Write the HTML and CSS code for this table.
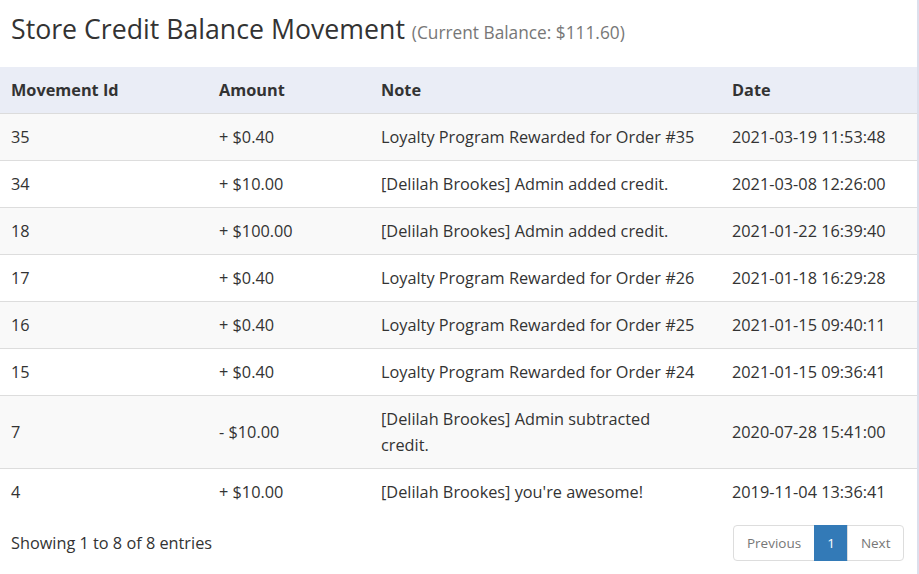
FILE: index.html
```html
<!DOCTYPE html>
<html>
<head>
<meta charset="utf-8">
<link rel="stylesheet" href="styles.css">
</head>
<body>
<div class="page">
  <h1 class="title">Store Credit Balance Movement <small class="sub">(Current Balance: $111.60)</small></h1>
  <table class="grid">
    <colgroup>
      <col class="c-id"><col class="c-amt"><col class="c-note"><col class="c-date">
    </colgroup>
    <thead>
      <tr><th>Movement Id</th><th>Amount</th><th>Note</th><th>Date</th></tr>
    </thead>
    <tbody>
      <tr><td>35</td><td>+ $0.40</td><td class="note">Loyalty Program Rewarded for Order #35</td><td>2021-03-19 11:53:48</td></tr>
      <tr><td>34</td><td>+ $10.00</td><td class="note">[Delilah Brookes] Admin added credit.</td><td>2021-03-08 12:26:00</td></tr>
      <tr><td>18</td><td>+ $100.00</td><td class="note">[Delilah Brookes] Admin added credit.</td><td>2021-01-22 16:39:40</td></tr>
      <tr><td>17</td><td>+ $0.40</td><td class="note">Loyalty Program Rewarded for Order #26</td><td>2021-01-18 16:29:28</td></tr>
      <tr><td>16</td><td>+ $0.40</td><td class="note">Loyalty Program Rewarded for Order #25</td><td>2021-01-15 09:40:11</td></tr>
      <tr><td>15</td><td>+ $0.40</td><td class="note">Loyalty Program Rewarded for Order #24</td><td>2021-01-15 09:36:41</td></tr>
      <tr><td>7</td><td>- $10.00</td><td class="note">[Delilah Brookes] Admin subtracted credit.</td><td>2020-07-28 15:41:00</td></tr>
      <tr><td>4</td><td>+ $10.00</td><td class="note">[Delilah Brookes] you're awesome!</td><td>2019-11-04 13:36:41</td></tr>
    </tbody>
  </table>
  <div class="footer">
    <div class="info">Showing 1 to 8 of 8 entries</div>
    <ul class="pager">
      <li class="pg disabled">Previous</li>
      <li class="pg active">1</li>
      <li class="pg disabled">Next</li>
    </ul>
  </div>
</div>
</body>
</html>
```

FILE: styles.css
```css
html, body {
  margin: 0;
  padding: 0;
}
body {
  background: #dcdfec;
  font-family: "Open Sans", "Liberation Sans", sans-serif;
  color: #333;
  font-size: 16.3px;
}
.page {
  width: 917px;
  height: 574px;
  background: #fff;
  overflow: hidden;
}
.title {
  margin: 0;
  padding: 10px 11px 0;
  height: 67px;
  box-sizing: border-box;
  font-weight: 400;
  font-size: 26.7px;
  line-height: 38px;
  color: #333;
}
.sub {
  font-size: 17.3px;
  color: #777;
}
.grid {
  width: 917px;
  border-collapse: collapse;
  table-layout: fixed;
}
.c-id { width: 208px; }
.c-amt { width: 162px; }
.c-note { width: 351px; }
.c-date { width: 196px; }
.grid th {
  background: #eaedf6;
  text-align: left;
  font-weight: 700;
  padding: 10px 9px 10px 11px;
  line-height: 26px;
  border-bottom: 1px solid #dcdcdc;
}
.grid td {
  padding: 10px 9px 10px 11px;
  line-height: 26px;
  border-top: 1px solid #ddd;
  vertical-align: middle;
}
.grid td.note {
  padding-right: 23px;
}
.grid tbody tr:first-child td { border-top: 0; }
.grid tbody tr:nth-child(odd) td { background: #f9f9f9; }
.footer {
  display: flex;
  justify-content: space-between;
  align-items: center;
  padding: 10px 13px 0 11px;
}
.info {
  line-height: 26px;
}
.pager {
  display: flex;
  list-style: none;
  margin: 0;
  padding: 0;
  font-size: 13.5px;
}
.pg {
  padding: 8px 12.5px;
  line-height: 18px;
  border: 1px solid #ddd;
  margin-left: -1px;
  color: #777;
}
.pg:first-child { border-radius: 4px 0 0 4px; margin-left: 0; }
.pg:last-child { border-radius: 0 4px 4px 0; }
.pg.active {
  background: #337ab7;
  border-color: #337ab7;
  color: #fff;
}
```
